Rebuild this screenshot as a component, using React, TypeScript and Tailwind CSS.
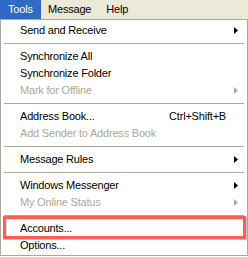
import React from "react"

type Item =
  | { kind: "sep" }
  | { kind: "item"; label: string; shortcut?: string; sub?: boolean; disabled?: boolean }

const items: Item[] = [
  { kind: "item", label: "Send and Receive", sub: true },
  { kind: "sep" },
  { kind: "item", label: "Synchronize All" },
  { kind: "item", label: "Synchronize Folder" },
  { kind: "item", label: "Mark for Offline", sub: true, disabled: true },
  { kind: "sep" },
  { kind: "item", label: "Address Book...", shortcut: "Ctrl+Shift+B" },
  { kind: "item", label: "Add Sender to Address Book", disabled: true },
  { kind: "sep" },
  { kind: "item", label: "Message Rules", sub: true },
  { kind: "sep" },
  { kind: "item", label: "Windows Messenger", sub: true },
  { kind: "item", label: "My Online Status", sub: true, disabled: true },
  { kind: "sep" },
  { kind: "item", label: "Accounts..." },
  { kind: "item", label: "Options..." },
]

function Arrow({ disabled }: { disabled?: boolean }) {
  return (
    <svg width="4" height="7" viewBox="0 0 4 7" className="absolute right-[9px] top-[5px]">
      <path d="M0 0 L4 3.5 L0 7 Z" fill={disabled ? "#aca899" : "#000"} />
    </svg>
  )
}

export default function App() {
  return (
    <div
      className="w-[248px] h-[257px] bg-white text-[11px] leading-[17px] tracking-[-0.2px] text-black"
      style={{ fontFamily: '"Liberation Sans", Arial, sans-serif' }}
    >
      <div className="flex h-[19px] bg-[#ece9d8] items-center">
        <div className="h-full w-[41px] bg-[#316ac5] text-white flex items-center pl-[8px]">Tools</div>
        <div className="pl-[7px] pr-[8px]">Message</div>
        <div className="pl-[7px]">Help</div>
      </div>

      <div className="relative border border-[#aca899] pt-[2px] pb-[1px] bg-white">
        {items.map((it, i) =>
          it.kind === "sep" ? (
            <div key={i} className="py-[4px] px-[3px]">
              <div className="h-px bg-[#aca899]" />
            </div>
          ) : (
            <div
              key={i}
              className={`relative flex h-[17px] items-center pl-[19px] pr-[21px] ${
                it.disabled ? "text-[#aca899]" : "text-black"
              }`}
            >
              <span className="flex-1 whitespace-nowrap">{it.label}</span>
              {it.shortcut && <span className="whitespace-nowrap">{it.shortcut}</span>}
              {it.sub && <Arrow disabled={it.disabled} />}
            </div>
          )
        )}

        <div className="absolute left-[2px] right-[1px] top-[196px] h-[23px] border-[3px] border-[#fa5f56] shadow-[inset_1px_1px_0_#e0e0e0,1px_1px_0_#c8c8c8]" />
      </div>
    </div>
  )
}
